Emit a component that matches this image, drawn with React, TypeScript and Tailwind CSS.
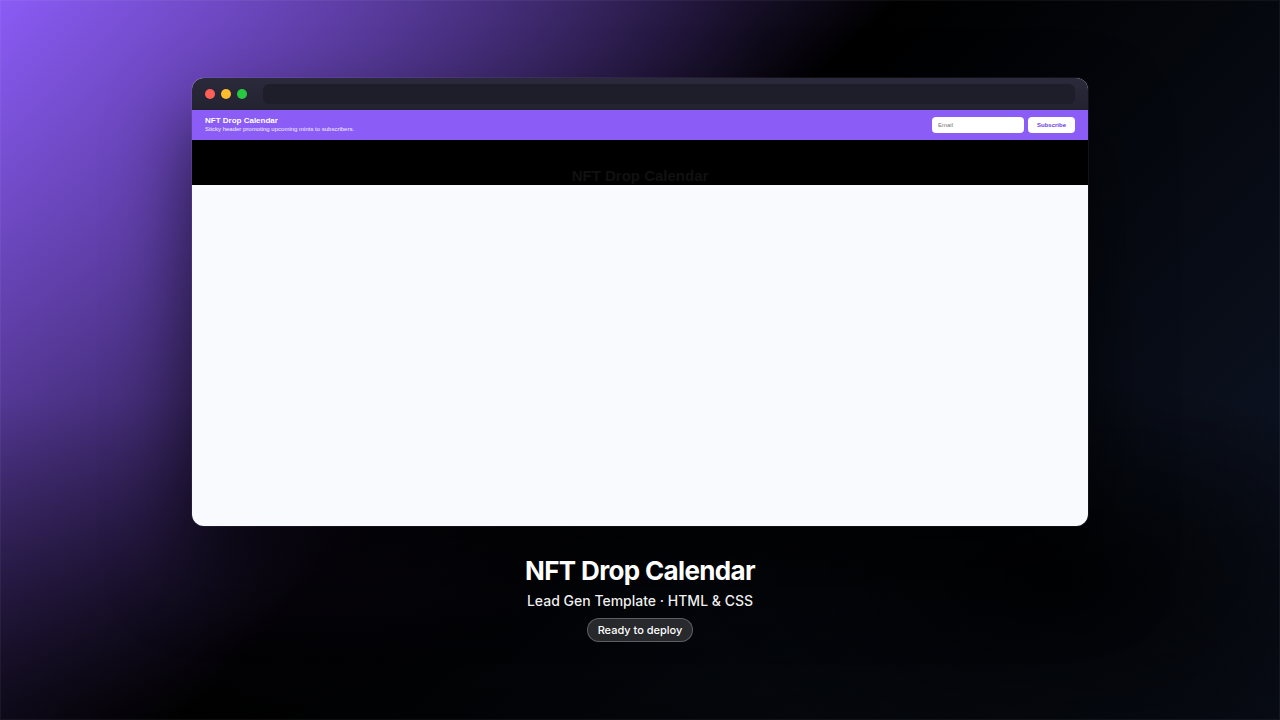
export default function App() {
  return (
    <main className="flex min-h-screen flex-col items-center bg-[radial-gradient(ellipse_30%_28%_at_82%_80%,rgba(0,0,0,0.85),transparent),linear-gradient(to_top,rgba(0,0,0,0.5),transparent_45%),radial-gradient(ellipse_45%_75%_at_16%_25%,rgba(139,92,246,0.26),transparent),linear-gradient(135deg,#8b5cf6_0%,#000_45%,#0f172a_100%)] pt-[78px] pb-8 font-['Inter',sans-serif] text-white shadow-[inset_0_0_0_1px_rgba(255,255,255,0.05)]">
      <section
        aria-label="Template preview"
        className="w-[70%] overflow-hidden rounded-xl bg-[#f9fafe] font-['Liberation_Sans',sans-serif] shadow-[0_0_0_1px_rgba(255,255,255,0.06),0_44px_80px_rgba(0,0,0,0.65)]"
      >
        <div className="flex h-8 items-center gap-4 bg-linear-to-b from-[#2a2a3c] to-[#222230] px-[13px] pb-px">
          <div className="flex gap-1.5">
            <span className="size-2.5 rounded-full bg-[#ff5f57]" />
            <span className="size-2.5 rounded-full bg-[#febc2e]" />
            <span className="size-2.5 rounded-full bg-[#28c840]" />
          </div>
          <div className="h-5 flex-1 rounded-md bg-[#1e1e2b]" />
        </div>
        <header className="flex h-[30px] items-center justify-between bg-[#8b5cf6] px-[13px]">
          <div className="pb-px">
            <p className="text-[8px] leading-[9px] font-bold">NFT Drop Calendar</p>
            <p className="text-[6px] leading-[8px] text-white/90">
              Sticky header promoting upcoming mints to subscribers.
            </p>
          </div>
          <form className="flex gap-1" onSubmit={(event) => event.preventDefault()}>
            <input
              type="email"
              aria-label="Email"
              placeholder="Email"
              className="h-4 w-[92px] rounded-sm bg-white px-1.5 text-[6px] text-black placeholder:text-[#757575]"
            />
            <button type="submit" className="h-4 rounded-sm bg-white px-[9px] text-[6px] font-bold text-[#6d3be8]">
              Subscribe
            </button>
          </form>
        </header>
        <div className="flex h-[45px] items-end justify-center overflow-hidden bg-black pb-px">
          <h2 className="text-[15px] leading-4 font-bold text-[#111111]">NFT Drop Calendar</h2>
        </div>
        <div className="h-[341px]" />
      </section>
      <h1 className="mt-[29px] text-[26px] leading-8 font-bold tracking-tight">NFT Drop Calendar</h1>
      <p className="mt-1 text-[14px] leading-5 font-medium text-white/95">Lead Gen Template · HTML &amp; CSS</p>
      <span className="mt-[7px] rounded-full border border-white/25 bg-white/15 px-2.5 text-[11px] leading-[22px] font-medium">
        Ready to deploy
      </span>
    </main>
  );
}
